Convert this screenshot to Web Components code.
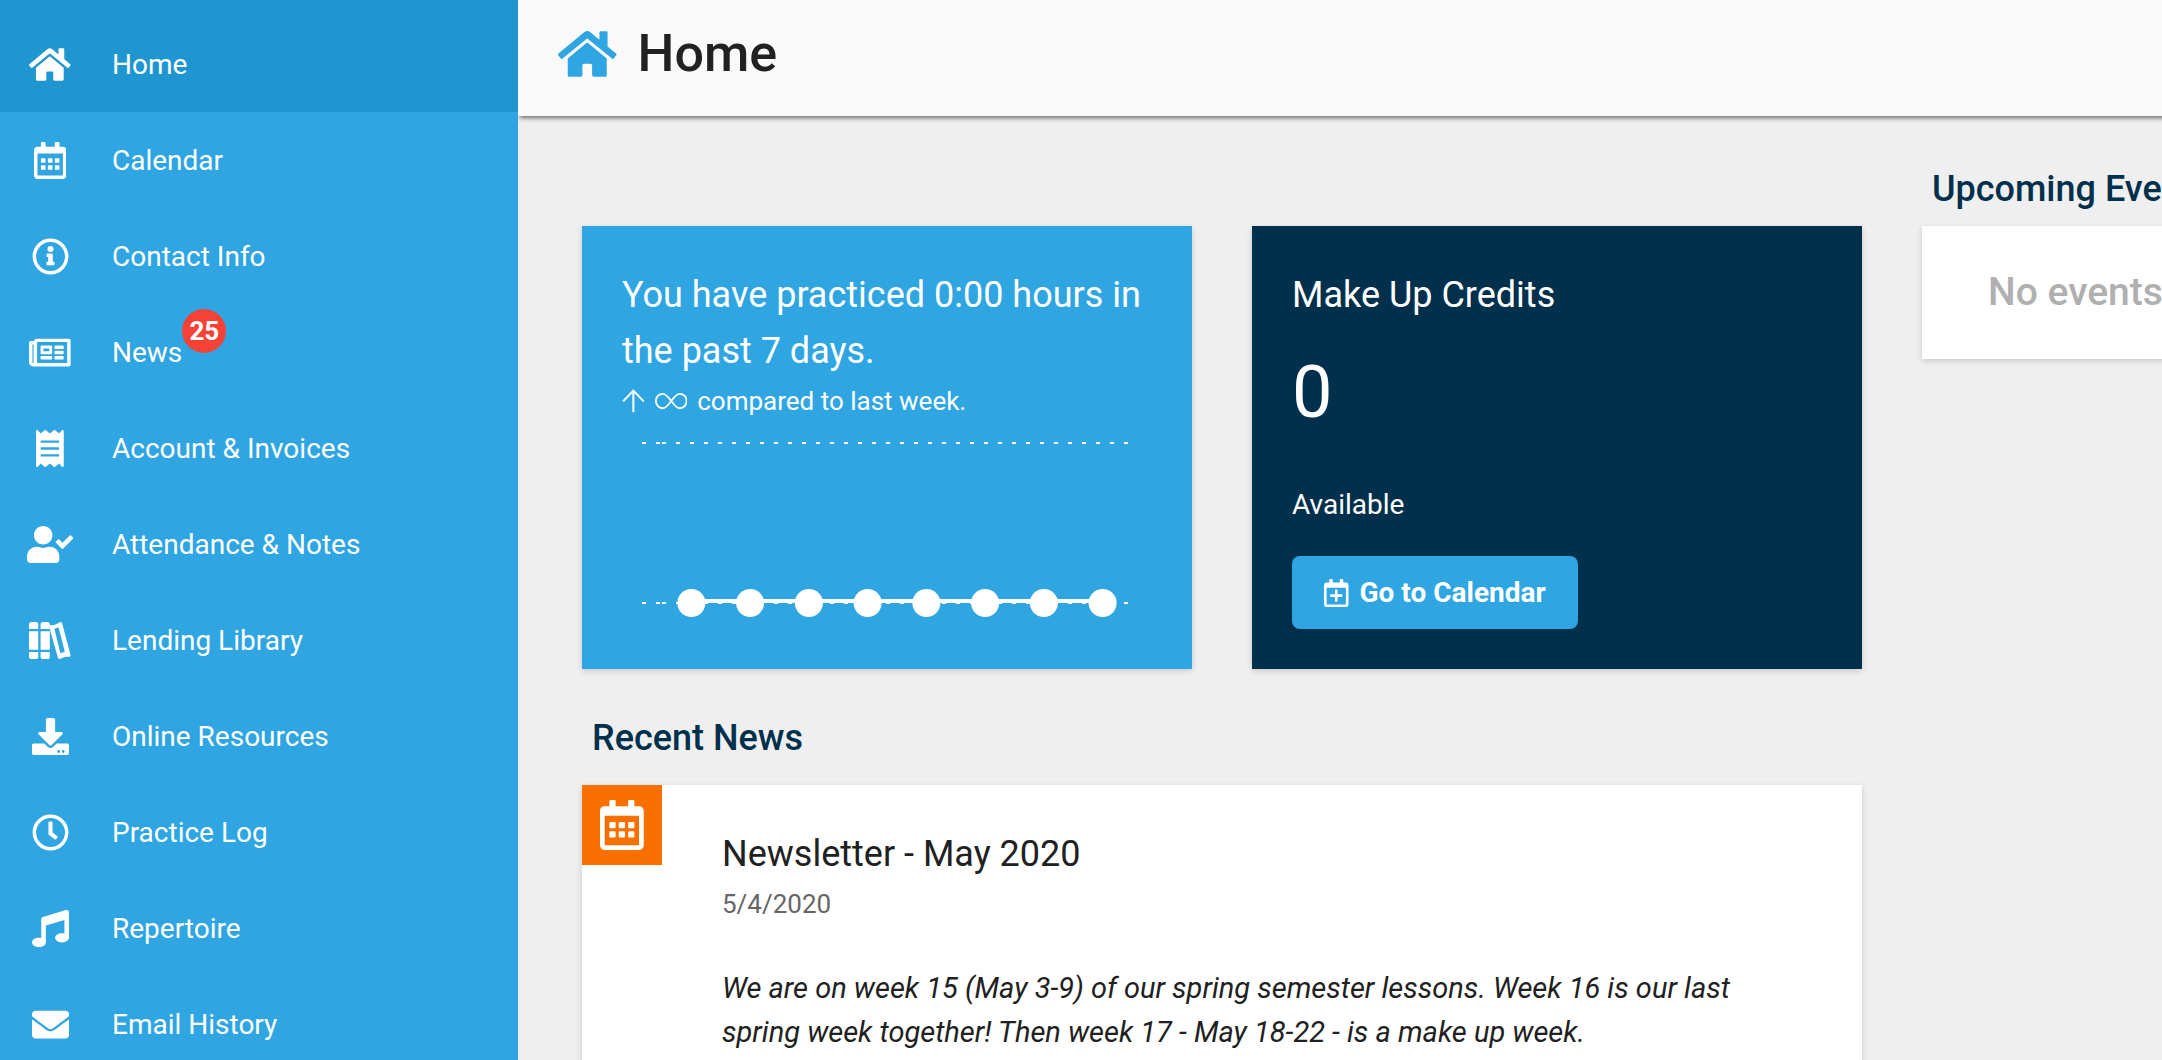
<!DOCTYPE html>
<html lang="en">
<head>
<meta charset="utf-8">
<title>Home</title>
<style>
	body {
		margin: 0;
		font-family: Roboto, "Liberation Sans", sans-serif;
		font-size: 28px;
		line-height: 44px;
		color: #212121;
		background: #efefef;
		--blue: #2fa5e1;
		--blue-dark: #1f96cf;
		--navy: #00304c;
		--orange: #f77000;
		--red: #f44336;
	}
</style>
</head>
<body>
<portal-app>
	<side-nav slot="nav">
		<nav-item icon="home" active>Home</nav-item>
		<nav-item icon="calendar">Calendar</nav-item>
		<nav-item icon="info">Contact Info</nav-item>
		<nav-item icon="news" badge="25">News</nav-item>
		<nav-item icon="receipt">Account &amp; Invoices</nav-item>
		<nav-item icon="attendance">Attendance &amp; Notes</nav-item>
		<nav-item icon="books">Lending Library</nav-item>
		<nav-item icon="download">Online Resources</nav-item>
		<nav-item icon="clock">Practice Log</nav-item>
		<nav-item icon="music">Repertoire</nav-item>
		<nav-item icon="envelope">Email History</nav-item>
	</side-nav>
	<page-header slot="header" icon="home">Home</page-header>
	<home-dashboard>
		<practice-card slot="cards" values="0,0,0,0,0,0,0,0">
			You have practiced 0:00 hours in the past 7 days.
			<span slot="note">compared to last week.</span>
		</practice-card>
		<credits-card slot="cards" amount="0">
			Make Up Credits
			<span slot="status">Available</span>
			<span slot="action">Go to Calendar</span>
		</credits-card>
		<news-card slot="news" date="5/4/2020">
			<span slot="title">Newsletter - May 2020</span>
			We are on week 15 (May 3-9) of our spring semester lessons. Week 16 is our last spring week together! Then week 17 - May 18-22 - is a make up week.
		</news-card>
		<events-card slot="events">No events</events-card>
	</home-dashboard>
</portal-app>

<script>
const CALENDAR_FRAME = 'M448 112v352c0 26.500-21.500 48-48 48H48c-26.500 0-48-21.500-48-48V112c0-26.500 21.500-48 48-48h48V12c0-6.600 5.400-12 12-12h40c6.600 0 12 5.400 12 12v52h128V12c0-6.600 5.400-12 12-12h40c6.600 0 12 5.400 12 12v52h48c26.500 0 48 21.500 48 48zm-48 346V160H48v298c0 3.300 2.700 6 6 6h340c3.300 0 6-2.700 6-6z';

// [width of the 512 high view box, markup]
const ICONS = {
	home: [576, '<path d="M280.37 148.26L96 300.11V464a16 16 0 0 0 16 16l112.06-.29a16 16 0 0 0 15.92-16V368a16 16 0 0 1 16-16h64a16 16 0 0 1 16 16v95.64a16 16 0 0 0 16 16.05L464 480a16 16 0 0 0 16-16V300L295.67 148.26a12.19 12.19 0 0 0-15.3 0zM571.6 251.47L488 182.56V44.05a12 12 0 0 0-12-12h-56a12 12 0 0 0-12 12v72.61L318.47 43a48 48 0 0 0-61 0L4.34 251.47a12 12 0 0 0-1.6 16.9l25.5 31A12 12 0 0 0 45.15 301l235.22-193.74a12.19 12.19 0 0 1 15.3 0L530.9 301a12 12 0 0 0 16.9-1.6l25.5-31a12 12 0 0 0-1.7-16.93z"/>'],
	calendar: [448, `<path d="${CALENDAR_FRAME}"/>` + [96, 192, 288].map(x =>
		`<rect x="${x}" y="224" width="64" height="64" rx="12"/><rect x="${x}" y="320" width="64" height="64" rx="12"/>`).join('')],
	calendarPlus: [448, `<path d="${CALENDAR_FRAME}"/><path d="M336 292v24c0 6.600-5.400 12-12 12h-76v76c0 6.600-5.400 12-12 12h-24c-6.600 0-12-5.400-12-12v-76h-76c-6.600 0-12-5.400-12-12v-24c0-6.600 5.400-12 12-12h76v-76c0-6.600 5.400-12 12-12h24c6.600 0 12 5.400 12 12v76h76c6.600 0 12 5.400 12 12z"/>`],
	info: [512, '<circle cx="256" cy="256" r="224" fill="none" stroke="currentColor" stroke-width="48"/><circle cx="256" cy="152" r="42"/><path d="M312 364c0 6.627-5.373 12-12 12h-88c-6.627 0-12-5.373-12-12v-24c0-6.627 5.373-12 12-12h12v-64h-12c-6.627 0-12-5.373-12-12v-24c0-6.627 5.373-12 12-12h64c6.627 0 12 5.373 12 12v100h12c6.627 0 12 5.373 12 12v24z"/>'],
	news: [576, '<path d="M552 64H112c-20.858 0-38.643 13.377-45.248 32H24c-13.255 0-24 10.745-24 24v272c0 30.928 25.072 56 56 56h496c13.255 0 24-10.745 24-24V88c0-13.255-10.745-24-24-24zM48 392V144h16v248c0 4.411-3.589 8-8 8s-8-3.589-8-8zm480 8H111.422c.374-2.614.578-5.283.578-8V112h416v288zM172 280h136c6.627 0 12-5.373 12-12v-96c0-6.627-5.373-12-12-12H172c-6.627 0-12 5.373-12 12v96c0 6.627 5.373 12 12 12zm28-80h80v40h-80v-40z"/><rect x="160" y="304" width="160" height="48" rx="12"/><rect x="352" y="304" width="128" height="48" rx="12"/><rect x="352" y="160" width="128" height="48" rx="12"/><rect x="352" y="232" width="128" height="48" rx="12"/>'],
	receipt: [384, '<path d="M358.4 3.2L320 48 265.6 3.2a15.9 15.9 0 0 0-19.2 0L192 48 137.6 3.2a15.9 15.9 0 0 0-19.2 0L64 48 25.6 3.2C15-4.7 0 2.8 0 16v480c0 13.2 15 20.7 25.6 12.8L64 464l54.4 44.8a15.9 15.9 0 0 0 19.2 0L192 464l54.4 44.8a15.9 15.9 0 0 0 19.2 0L320 464l38.4 44.8c10.5 7.9 25.6.4 25.6-12.8V16c0-13.2-15-20.7-25.6-12.8zM320 360c0 4.400-3.600 8-8 8H72c-4.400 0-8-3.600-8-8v-16c0-4.400 3.600-8 8-8h240c4.400 0 8 3.600 8 8v16zm0-96c0 4.400-3.600 8-8 8H72c-4.400 0-8-3.600-8-8v-16c0-4.400 3.600-8 8-8h240c4.400 0 8 3.600 8 8v16zm0-96c0 4.400-3.600 8-8 8H72c-4.400 0-8-3.600-8-8v-16c0-4.400 3.600-8 8-8h240c4.400 0 8 3.600 8 8v16z"/>'],
	attendance: [640, '<path d="M224 256c70.700 0 128-57.300 128-128S294.700 0 224 0 96 57.300 96 128s57.300 128 128 128zm89.600 32h-16.700c-22.200 10.200-46.900 16-72.900 16s-50.600-5.800-72.900-16h-16.700C60.200 288 0 348.200 0 422.400V464c0 26.500 21.500 48 48 48h352c26.500 0 48-21.500 48-48v-41.600c0-74.200-60.200-134.400-134.400-134.400z"/><path d="M636.6 159.6l-28-28.1c-4.700-4.700-12.300-4.700-17-.1L490.200 232l-44-44.300c-4.700-4.700-12.300-4.700-17-.1l-28.100 27.900c-4.700 4.700-4.700 12.300-.1 17l80.600 81.200c4.700 4.700 12.300 4.700 17 .1l137.800-136.700c4.700-4.700 4.700-12.300.2-17.500z"/>'],
	books: [576, '<path d="M0 96V32C0 14.300 14.300 0 32 0h64c17.700 0 32 14.300 32 32v64zM0 128h128v256H0zM0 416h128v64c0 17.700-14.300 32-32 32H32c-17.700 0-32-14.300-32-32zM160 96V32c0-17.700 14.300-32 32-32h64c17.700 0 32 14.300 32 32v64zM160 128h128v256H160zM160 416h128v64c0 17.700-14.300 32-32 32h-64c-17.700 0-32-14.300-32-32z"/><path fill-rule="evenodd" d="M284 44c40 0 76-4 110-24l34-18c16-4 28 6 32 22l115 430c4 16-4 26-20 30-28-6-44-4-68 4l-58 22c-16 4-26-4-30-20L288 100zM352 92l82 340 62-22-88-336z"/>'],
	download: [512, '<path d="M216 0h80c13.300 0 24 10.700 24 24v168h87.700c17.800 0 26.700 21.500 14.100 34.100L269.700 378.300c-7.500 7.500-19.800 7.500-27.300 0L90.100 226.100c-12.600-12.600-3.700-34.100 14.100-34.100H192V24c0-13.300 10.700-24 24-24zm296 376v112c0 13.300-10.700 24-24 24H24c-13.300 0-24-10.700-24-24V376c0-13.300 10.700-24 24-24h146.700l49 49c20.100 20.100 52.500 20.100 72.600 0l49-49H488c13.300 0 24 10.700 24 24zm-124 88c0-11-9-20-20-20s-20 9-20 20 9 20 20 20 20-9 20-20zm64 0c0-11-9-20-20-20s-20 9-20 20 9 20 20 20 20-9 20-20z"/>'],
	clock: [512, '<circle cx="256" cy="256" r="224" fill="none" stroke="currentColor" stroke-width="48"/><path d="M317.800 351.600l-84.900-61.700c-3.100-2.300-4.900-5.900-4.900-9.700V116c0-6.600 5.400-12 12-12h32c6.600 0 12 5.400 12 12v141.700l66.800 48.600c5.400 3.900 6.500 11.400 2.600 16.800L334.600 349c-3.900 5.300-11.400 6.500-16.800 2.600z"/>'],
	music: [512, '<path d="M512 32c0-21.700-21.100-37-41.600-30.500L150.400 96c-13.300 4.200-22.400 16.500-22.400 30.500v261.400c-10-2.400-20.700-3.900-32-3.900-53 0-96 28.700-96 64s43 64 96 64 96-28.700 96-64V214.300l256-75v184.600c-10-2.400-20.700-3.900-32-3.900-53 0-96 28.700-96 64s43 64 96 64 96-28.700 96-64z"/>'],
	envelope: [512, '<path d="M502.300 190.800c3.900-3.100 9.700-.2 9.700 4.700V400c0 26.500-21.500 48-48 48H48c-26.500 0-48-21.500-48-48V195.600c0-5 5.700-7.800 9.700-4.700 22.400 17.400 52.100 39.500 154.100 113.600 21.100 15.400 56.700 47.800 92.200 47.600 35.700.3 72-32.800 92.300-47.600 102-74.100 131.600-96.300 154-113.700zM256 320c23.200.4 56.600-29.200 73.400-41.400 132.700-96.300 142.800-104.700 173.400-128.700 5.800-4.500 9.200-11.500 9.200-18.900v-19c0-26.500-21.500-48-48-48H48c-26.500 0-48 21.500-48 48v19c0 7.400 3.400 14.300 9.200 18.900 30.600 23.900 40.700 32.400 173.400 128.700 16.800 12.200 50.200 41.800 73.400 41.400z"/>'],
	arrowUp: [448, '<path d="M224 478V52M20 264L224 52l204 212" fill="none" stroke="currentColor" stroke-width="40"/>'],
	infinity: [640, '<path d="M320 256c-60 80-100 142-166 142C74 398 18 334 18 256s56-142 136-142c66 0 106 62 166 142s100 142 166 142c80 0 136-64 136-142s-56-142-136-142c-66 0-106 62-166 142z" fill="none" stroke="currentColor" stroke-width="36"/>']
};

class FaIcon extends HTMLElement {
	connectedCallback() {
		const [width, markup] = ICONS[this.getAttribute('name')];
		this.attachShadow({ mode: 'open' }).innerHTML = `
			<style>
				:host {
					display: inline-flex;
					justify-content: center;
					height: 37px;
				}
				svg {
					display: block;
					height: 100%;
					fill: currentColor;
				}
			</style>
			<svg viewBox="0 0 ${width} 512" aria-hidden="true">${markup}</svg>
		`;
	}
}

class PortalApp extends HTMLElement {
	connectedCallback() {
		this.attachShadow({ mode: 'open' }).innerHTML = `
			<style>
				:host {
					display: flex;
					height: 100vh;
					overflow: hidden;
				}
				main {
					flex: 1;
					min-width: 0;
					overflow: hidden;
				}
			</style>
			<slot name="nav"></slot>
			<main>
				<slot name="header"></slot>
				<slot></slot>
			</main>
		`;
	}
}

class SideNav extends HTMLElement {
	connectedCallback() {
		this.attachShadow({ mode: 'open' }).innerHTML = `
			<style>
				:host {
					display: block;
					flex: 0 0 518px;
					overflow: hidden;
					color: white;
					background: var(--blue);
				}
				nav {
					display: flex;
					flex-direction: column;
				}
			</style>
			<nav><slot></slot></nav>
		`;
	}
}

class NavItem extends HTMLElement {
	connectedCallback() {
		const badge = this.getAttribute('badge');
		this.attachShadow({ mode: 'open' }).innerHTML = `
			<style>
				:host {
					display: block;
				}
				:host([active]) {
					padding-top: 16px;
					background: var(--blue-dark);
				}
				a {
					display: flex;
					align-items: center;
					gap: 38px;
					height: 96px;
					padding-left: 26px;
					color: inherit;
					text-decoration: none;
				}
				fa-icon {
					width: 48px;
				}
				.label {
					position: relative;
					padding-top: 2px;
				}
				.badge {
					position: absolute;
					left: 100%;
					bottom: 22px;
					width: 44px;
					border-radius: 50%;
					font-size: 26px;
					font-weight: 700;
					text-align: center;
					background: var(--red);
				}
			</style>
			<a href="#">
				<fa-icon name="${this.getAttribute('icon')}"></fa-icon>
				<span class="label"><slot></slot>${badge ? `<span class="badge">${badge}</span>` : ''}</span>
			</a>
		`;
	}
}

class PageHeader extends HTMLElement {
	connectedCallback() {
		this.attachShadow({ mode: 'open' }).innerHTML = `
			<style>
				:host {
					display: flex;
					align-items: flex-start;
					gap: 21px;
					position: relative;
					box-sizing: border-box;
					height: 116px;
					margin-right: -8px;
					padding: 26px 40px;
					background: #fafafa;
					box-shadow: 0 4px 4px -2px rgba(0, 0, 0, .5), 0 2px 8px rgba(0, 0, 0, .08);
				}
				fa-icon {
					height: 52px;
					padding-top: 2px;
					color: var(--blue);
				}
				h1 {
					margin: 0;
					font-size: 52px;
					font-weight: 500;
					line-height: 56px;
				}
			</style>
			<fa-icon name="${this.getAttribute('icon')}"></fa-icon>
			<h1><slot></slot></h1>
		`;
	}
}

class HomeDashboard extends HTMLElement {
	connectedCallback() {
		this.attachShadow({ mode: 'open' }).innerHTML = `
			<style>
				:host {
					display: grid;
					grid-template-columns: minmax(1280px, 2fr) minmax(610px, 1fr);
					gap: 60px;
					padding: 0 64px;
				}
				.left {
					padding-top: 110px;
				}
				.cards {
					display: grid;
					grid-template-columns: 1fr 1fr;
					gap: 60px;
				}
				h2 {
					margin: 0;
					padding: 0 10px;
					font-size: 36px;
					font-weight: 500;
					line-height: 56px;
					color: var(--navy);
				}
				.recent {
					padding-top: 41px;
					padding-bottom: 19px;
				}
				.upcoming {
					padding-top: 45px;
					padding-bottom: 9px;
				}
			</style>
			<div class="left">
				<div class="cards"><slot name="cards"></slot></div>
				<h2 class="recent">Recent News</h2>
				<slot name="news"></slot>
			</div>
			<div>
				<h2 class="upcoming">Upcoming Events</h2>
				<slot name="events"></slot>
			</div>
		`;
	}
}

class PracticeCard extends HTMLElement {
	connectedCallback() {
		const values = this.getAttribute('values').split(',').map(Number);
		const step = 470 / values.length;
		const max = Math.max(...values, 1);
		const points = values.map((value, i) => [40 + step * (i + 0.5), 180 - 160 * value / max]);
		this.attachShadow({ mode: 'open' }).innerHTML = `
			<style>
				:host {
					display: block;
					padding: 41px 40px 40px;
					color: white;
					background: var(--blue);
					box-shadow: 0 2px 6px rgba(0, 0, 0, .16);
				}
				h3 {
					margin: 0;
					font-size: 36px;
					font-weight: 400;
					line-height: 56px;
				}
				p {
					display: flex;
					align-items: center;
					gap: 10px;
					margin: 0;
					font-size: 26px;
				}
				fa-icon {
					height: 26px;
				}
				svg {
					display: block;
					width: 100%;
				}
				.grid {
					stroke: white;
					stroke-width: 2;
					stroke-dasharray: 4 10;
				}
			</style>
			<h3><slot></slot></h3>
			<p><fa-icon name="arrowUp"></fa-icon><fa-icon name="infinity"></fa-icon><slot name="note"></slot></p>
			<svg viewBox="0 0 530 206" role="img" aria-label="Practice hours per day">
				<path class="grid" d="M20 20H38M40 20H510M20 180H38M40 180H510"/>
				<polyline points="${points.map(([x, y]) => `${x},${y - 2}`).join(' ')}" fill="none" stroke="white" stroke-width="4"/>
				${points.map(([x, y]) => `<circle cx="${x}" cy="${y}" r="14" fill="white"/>`).join('')}
			</svg>
		`;
	}
}

class CreditsCard extends HTMLElement {
	connectedCallback() {
		this.attachShadow({ mode: 'open' }).innerHTML = `
			<style>
				:host {
					display: flex;
					flex-direction: column;
					align-items: flex-start;
					padding: 41px 40px 40px;
					color: white;
					background: var(--navy);
					box-shadow: 0 2px 6px rgba(0, 0, 0, .16);
				}
				h3 {
					margin: 0;
					font-size: 36px;
					font-weight: 400;
					line-height: 56px;
				}
				.amount {
					padding: 28px 0 48px;
					font-size: 72px;
					line-height: 84px;
				}
				button {
					display: flex;
					align-items: center;
					gap: 11px;
					height: 73px;
					margin-top: auto;
					padding: 0 32px;
					border: 0;
					border-radius: 8px;
					font: inherit;
					font-weight: 700;
					color: white;
					background: var(--blue);
				}
				fa-icon {
					height: 28px;
				}
			</style>
			<h3><slot></slot></h3>
			<div class="amount">${this.getAttribute('amount')}</div>
			<slot name="status"></slot>
			<button type="button"><fa-icon name="calendarPlus"></fa-icon><slot name="action"></slot></button>
		`;
	}
}

class NewsCard extends HTMLElement {
	connectedCallback() {
		this.attachShadow({ mode: 'open' }).innerHTML = `
			<style>
				:host {
					display: flex;
					align-items: flex-start;
					gap: 60px;
					background: white;
					box-shadow: 0 2px 6px rgba(0, 0, 0, .16);
				}
				.tag {
					display: flex;
					flex: 0 0 80px;
					align-items: center;
					justify-content: center;
					height: 80px;
					color: white;
					background: var(--orange);
				}
				fa-icon {
					height: 50px;
				}
				article {
					padding: 41px 100px 40px 0;
				}
				h3 {
					margin: 0;
					font-size: 36px;
					font-weight: 400;
					line-height: 56px;
				}
				time {
					display: block;
					font-size: 26px;
					color: #666;
				}
				p {
					margin: 40px 0 0;
					font-size: 29px;
					font-style: italic;
				}
			</style>
			<div class="tag"><fa-icon name="calendar"></fa-icon></div>
			<article>
				<h3><slot name="title"></slot></h3>
				<time>${this.getAttribute('date')}</time>
				<p><slot></slot></p>
			</article>
		`;
	}
}

class EventsCard extends HTMLElement {
	connectedCallback() {
		this.attachShadow({ mode: 'open' }).innerHTML = `
			<style>
				:host {
					display: block;
					padding: 40px 66px;
					font-size: 39px;
					font-weight: 500;
					line-height: 53px;
					color: #b0b0b0;
					background: white;
					box-shadow: 0 2px 6px rgba(0, 0, 0, .16);
				}
			</style>
			<slot></slot>
		`;
	}
}

customElements.define('fa-icon', FaIcon);
customElements.define('portal-app', PortalApp);
customElements.define('side-nav', SideNav);
customElements.define('nav-item', NavItem);
customElements.define('page-header', PageHeader);
customElements.define('home-dashboard', HomeDashboard);
customElements.define('practice-card', PracticeCard);
customElements.define('credits-card', CreditsCard);
customElements.define('news-card', NewsCard);
customElements.define('events-card', EventsCard);
</script>
</body>
</html>
